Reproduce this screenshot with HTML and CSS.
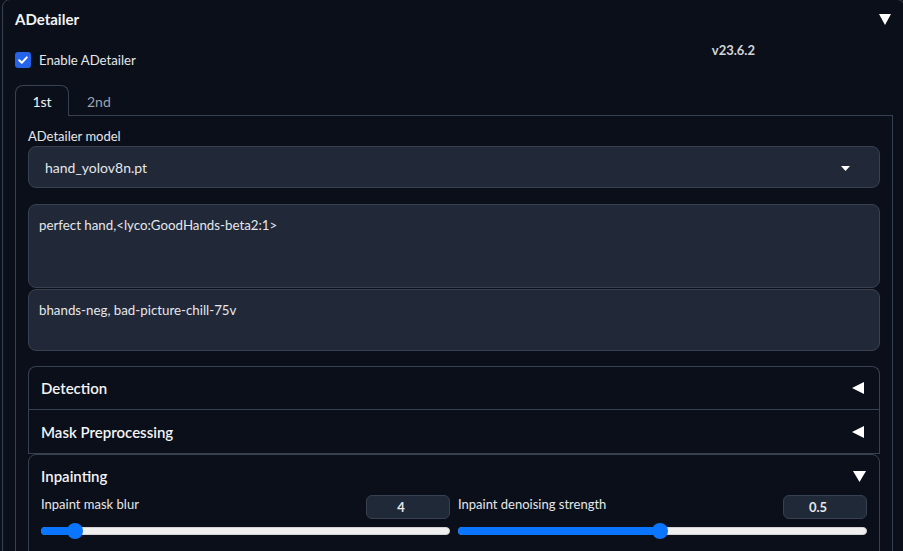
FILE: index.html
```html
<!DOCTYPE html>
<html>
<head>
<meta charset="utf-8">
<link rel="stylesheet" href="styles.css">
</head>
<body>
<div class="outer">
  <div class="head">
    <span class="title">ADetailer</span>
    <svg class="tri-down" width="12" height="11" viewBox="0 0 12 11"><polygon points="0,0 12,0 6,11" fill="#fff"/></svg>
  </div>
  <div class="enable-row">
    <label class="check">
      <span class="box"><svg width="16" height="16" viewBox="0 0 16 16"><path d="M4.2 8.3 L6.8 10.8 L11.8 5.4" fill="none" stroke="#fff" stroke-width="2" stroke-linecap="round" stroke-linejoin="round"/></svg></span>
      <span class="check-label">Enable ADetailer</span>
    </label>
    <span class="version">v23.6.2</span>
  </div>
  <div class="tabs">
    <div class="tab active">1st</div>
    <div class="tab">2nd</div>
  </div>
  <div class="panel">
    <div class="label">ADetailer model</div>
    <div class="dropdown">
      <span>hand_yolov8n.pt</span>
      <svg width="9" height="5" viewBox="0 0 9 5"><polygon points="0,0 9,0 4.5,5" fill="#fff"/></svg>
    </div>
    <div class="prompts">
      <div class="textarea ta1">perfect hand,&lt;lyco:GoodHands-beta2:1&gt;</div>
      <div class="textarea ta2">bhands-neg, bad-picture-chill-75v</div>
    </div>
    <div class="acc-group">
      <div class="acc-row first">
        <span>Detection</span>
        <svg width="12" height="12" viewBox="0 0 12 12"><polygon points="12,0 12,12 0,6" fill="#fff"/></svg>
      </div>
      <div class="acc-row last">
        <span>Mask Preprocessing</span>
        <svg width="12" height="12" viewBox="0 0 12 12"><polygon points="12,0 12,12 0,6" fill="#fff"/></svg>
      </div>
    </div>
    <div class="acc-open">
      <div class="acc-head">
        <span>Inpainting</span>
        <svg width="13" height="11" viewBox="0 0 13 11"><polygon points="0,0 13,0 6.5,11" fill="#fff"/></svg>
      </div>
      <div class="sliders">
        <div class="slider">
          <div class="slider-top">
            <span class="slabel">Inpaint mask blur</span>
            <span class="num">4</span>
          </div>
          <div class="track"><div class="fill" style="width:8%"></div><div class="thumb" style="left:8%"></div></div>
        </div>
        <div class="slider">
          <div class="slider-top">
            <span class="slabel">Inpaint denoising strength</span>
            <span class="num">0.5</span>
          </div>
          <div class="track"><div class="fill" style="width:49.5%"></div><div class="thumb" style="left:49.5%"></div></div>
        </div>
      </div>
    </div>
  </div>
</div>
</body>
</html>
```
FILE: styles.css
```css
* { box-sizing: border-box; }
html, body { margin: 0; padding: 0; }
body {
  background: #0b0f19;
  color: #e5e7eb;
  font-family: Lato, "Liberation Sans", sans-serif;
  width: 903px;
  height: 551px;
  overflow: hidden;
}
.outer {
  margin-left: 2px;
  margin-top: -1px;
  width: 903px;
  height: 580px;
  border: 1px solid #374151;
  border-radius: 8px;
  padding: 9px 12px 0 12px;
}
.head {
  display: flex;
  justify-content: space-between;
  align-items: center;
  height: 20px;
}
.title {
  font-size: 15px;
  font-weight: 700;
  color: #f3f4f6;
}
.tri-down { margin-right: 1px; }
.enable-row {
  display: flex;
  align-items: center;
  justify-content: space-between;
  margin-top: 18px;
  height: 22px;
}
.check {
  display: flex;
  align-items: center;
  gap: 8px;
  margin-top: 3px;
}
.box {
  width: 16px;
  height: 16px;
  border-radius: 3px;
  background: #2563eb;
  display: block;
}
.box svg { display: block; }
.check-label { font-size: 13.2px; color: #e5e7eb; }
.version {
  font-size: 13px;
  font-weight: 700;
  color: #d1d5db;
  margin-right: 137px;
  margin-top: -16px;
}
.tabs {
  display: flex;
  margin-top: 16px;
  height: 31px;
  position: relative;
  z-index: 1;
}
.tab {
  font-size: 14px;
  color: #9ca3af;
  padding: 0 17px;
  display: flex;
  align-items: center;
  height: 31px;
  border: 1px solid transparent;
  border-bottom: none;
}
.tab.active {
  color: #f3f4f6;
  border-color: #374151;
  border-radius: 8px 8px 0 0;
  background: #0b0f19;
  width: 54px;
  justify-content: center;
  padding: 0;
  height: 31px;
}
.panel {
  margin-top: -1px;
  width: 878px;
  border: 1px solid #374151;
  padding: 11px 12px 0 12px;
  height: 500px;
}
.label {
  font-size: 13px;
  line-height: 18px;
  color: #e5e7eb;
}
.dropdown {
  margin-top: 1px;
  height: 42px;
  background: #212837;
  border: 1px solid #374151;
  border-radius: 8px;
  display: flex;
  align-items: center;
  justify-content: space-between;
  padding: 0 29px 0 16px;
  font-size: 14px;
  color: #e5e7eb;
}
.dropdown svg { margin-top: 3px; }
.prompts {
  margin-top: 16px;
  display: flex;
  flex-direction: column;
  gap: 1px;
}
.textarea {
  background: #212837;
  border: 1px solid #374151;
  border-radius: 8px;
  padding: 12px 10px;
  font-size: 13.3px;
  color: #e5e7eb;
}
.ta1 { height: 84px; }
.ta2 { height: 62px; }
.acc-group {
  margin-top: 15px;
  border: 1px solid #374151;
  border-bottom: none;
  border-radius: 8px 8px 0 0;
}
.acc-row {
  display: flex;
  align-items: center;
  justify-content: space-between;
  padding: 0 15px 0 12px;
  font-size: 15px;
  font-weight: 600;
  color: #f3f4f6;
  border-bottom: 1px solid #374151;
}
.acc-row.first { height: 43px; }
.acc-row.last { height: 44px; }
.acc-open {
  border: 1px solid #374151;
  border-radius: 8px;
  padding: 0 12px;
  height: 120px;
}
.acc-head {
  height: 42px;
  display: flex;
  align-items: center;
  justify-content: space-between;
  font-size: 15px;
  font-weight: 600;
  color: #f3f4f6;
  padding-right: 1px;
}
.sliders {
  display: grid;
  grid-template-columns: 1fr 1fr;
  gap: 8px;
}
.slider-top {
  display: flex;
  justify-content: space-between;
  align-items: flex-start;
}
.slabel {
  font-size: 13px;
  color: #e5e7eb;
  margin-top: -1px;
}
.num {
  width: 84px;
  height: 24px;
  border: 1px solid #374151;
  background: #1f2937;
  border-radius: 6px;
  font-size: 13px;
  font-weight: 700;
  color: #e5e7eb;
  display: flex;
  align-items: center;
  justify-content: center;
  padding-right: 14px;
  margin-top: -2px;
}
.track {
  position: relative;
  margin-top: 8px;
  height: 8px;
  border-radius: 4px;
  background: #efefef;
  border: 1px solid #d4d4d4;
}
.fill {
  position: absolute;
  left: -1px;
  top: -1px;
  bottom: -1px;
  background: #0a75ff;
  border-radius: 4px 0 0 4px;
}
.thumb {
  position: absolute;
  top: 50%;
  width: 16px;
  height: 16px;
  margin-left: -8px;
  margin-top: -8px;
  border-radius: 50%;
  background: #0a75ff;
}
```
